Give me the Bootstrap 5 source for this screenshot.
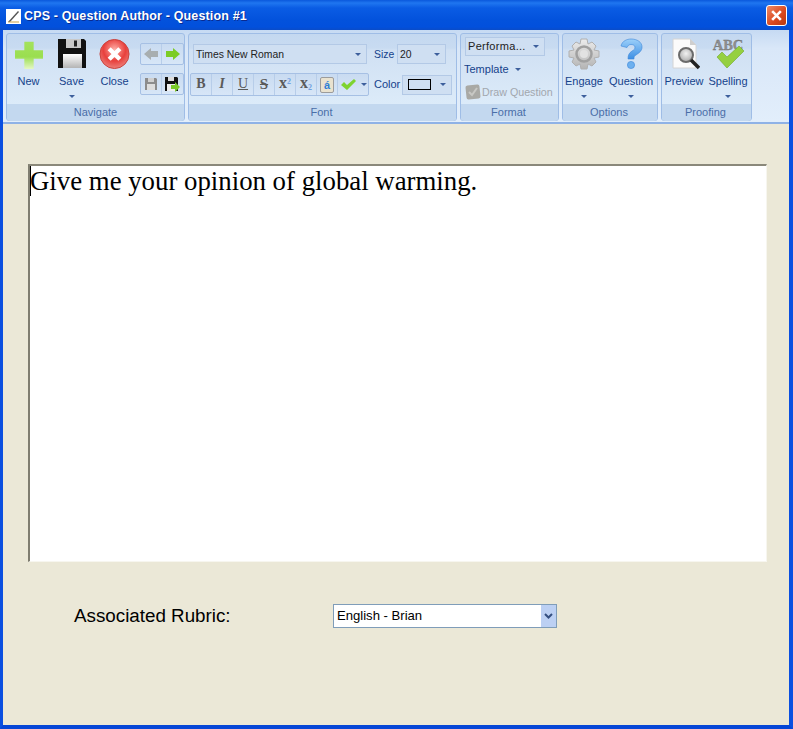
<!DOCTYPE html>
<html lang="en"><head><meta charset="utf-8"><title>CPS - Question Author</title>
<link rel="stylesheet" href="https://cdn.jsdelivr.net/npm/bootstrap@5.3.0/dist/css/bootstrap.min.css">
<style>
html,body{height:100%}
body{width:793px;height:729px;overflow:hidden;background:#ebe8d8;font-family:"Liberation Sans",Arial,sans-serif;color:#000}
.win{height:729px;border:solid #0a4fe0;border-width:0 4px 4px 3px;border-bottom-color:#0546d6;background:#ebe8d7}
.titlebar{height:30px;margin:0 -4px 0 -3px;padding:2px 6px 0 6px;background:linear-gradient(#0a58dc 0,#1f76f0 3px,#0a5ce4 8px,#0352dc 20px,#0250dc 27px,#0a4cc8 30px);color:#fff;font:bold 12.5px "Liberation Sans",sans-serif;text-shadow:1px 1px #0a2a90;letter-spacing:.15px}
.appicon{width:15px;height:15px;margin-right:3px}
.xbtn{width:21px;height:21px;margin-top:-1px;border:1px solid #fff;border-radius:3px;background:linear-gradient(135deg,#ee8a66,#d9471c 60%,#b93a12)}
.ribbon{height:94px;padding:3px 37px 3px 3px;background:linear-gradient(#c6daf3,#d9e7f8 20%,#e2eefb);border-bottom:2px solid #8fb2e6;gap:3px}
.grp{height:88px;border:1px solid #9fbde6;border-radius:3px;background:linear-gradient(#c4d8f0 0,#c8dbf1 14px,#d0e0f3 16px,#dcebf9 70px);color:#15428b;font-size:11px;line-height:13px}
.grp-body{height:70px;flex:none}
.grp-label{height:17px;line-height:17px;background:#c3d8ef;text-align:center;color:#4a6ea8;font-size:11px;border-radius:0 0 3px 3px}
.g-nav{width:179px}.g-font{width:269px}.g-format{width:99px}.g-opt{width:96px}.g-proof{width:91px}
.g-font .grp-label,.g-format .grp-label,.g-opt .grp-label,.g-proof .grp-label{padding-right:2px}
.g-opt .grp-body,.g-proof .grp-body{margin-left:-1px}
.big{padding-top:4px;color:#15428b;flex:none}
.big svg{display:block;height:32px}
.big .t{margin-top:5px;height:13px}
.caret-d{width:0;height:0;border:3px solid transparent;border-top:3px solid #3d5f9c;border-bottom:0;margin-top:7px}
.w43{width:43px}.w42{width:42px}.w44{width:44px}.w50{width:50px}.w46{width:46px}
.tb{border:1px solid #a6c0e4;border-radius:2px;background:linear-gradient(#c9dbf1,#d7e6f7)}
.tb>div{border-right:1px solid #b7cde9}
.tb>div:last-child{border-right:0}
.cell{width:21px;height:100%;font:bold 14px/20px "Liberation Serif",serif;color:#5a5a5a;flex:none}
.cell sup,.cell sub{font-size:8px;color:#6fa0e0;line-height:0}
.combo{border:1px solid #b3c9e6;background:#cfdff2;color:#222;font-size:10.4px;padding:0 5px 0 2px;height:20px;flex:none}
.combo .caret-d{margin-top:0;flex:none}
.navsm{width:44px;height:22px}
.navsm>div{width:50%}
.editor{width:739px;height:398px;margin:40px 0 0 25px;background:#fff;border:1px solid;border-color:#8a887a #f7f6ef #f7f6ef #7f7d70;border-top-width:2px;border-left-width:2px;font:26.8px/30px "Liberation Serif",serif;color:#000}
.caret-line{width:1px;height:30px;background:#000;margin-right:-1px}
.rubric{margin:42px 0 0 71px}
.rubric label{width:259px;font-size:18.8px;line-height:24px}
.rubric .form-select{width:224px;height:24px;border:1px solid #7f9db9;border-radius:0;padding:0 20px 0 3px;font:13.1px/20px "Liberation Sans",sans-serif;color:#000;
background:url("data:image/svg+xml,%3Csvg xmlns='http://www.w3.org/2000/svg' width='15' height='22'%3E%3Crect width='15' height='22' fill='%23bcd0f3'/%3E%3Cpath d='M4 9l3.500 3.500L11 9' fill='none' stroke='%23344f80' stroke-width='2'/%3E%3C/svg%3E") no-repeat right 0 center #fff}
.draw{color:#a2a7ae;font-size:10.7px}
</style></head><body>
<div class="win d-flex flex-column">
<div class="titlebar d-flex align-items-center flex-none">
<svg class="appicon" viewBox="0 0 15 15"><rect width="15" height="15" fill="#fff"/><path d="M2 13L12 2l1 1L4 13z" fill="#555"/><path d="M2 13h11" stroke="#c9a04a"/></svg>
<span class="flex-grow-1">CPS - Question Author - Question #1</span>
<div class="xbtn d-flex align-items-center justify-content-center"><svg width="13" height="13" viewBox="0 0 12 12"><path d="M2 2l8 8M10 2l-8 8" stroke="#fff" stroke-width="2.4"/></svg></div>
</div>
<div class="ribbon d-flex">

<div class="grp g-nav d-flex flex-column">
<div class="grp-body d-flex">
<div class="big w43 d-flex flex-column align-items-center">
<svg width="28" viewBox="0 0 30 32"><defs><linearGradient id="gp" x1="0" y1="0" x2="0" y2="1"><stop offset="0" stop-color="#a4e25c"/><stop offset=".55" stop-color="#9ade50"/><stop offset="1" stop-color="#e4f7c4"/></linearGradient></defs><path d="M10 3h10v9h10v9H20v11H10V21H0v-9h10z" fill="url(#gp)"/></svg>
<div class="t">New</div></div>
<div class="big w43 d-flex flex-column align-items-center">
<svg width="32" viewBox="0 0 32 32"><defs><linearGradient id="gf" x1="0" y1="0" x2="0" y2="1"><stop offset="0" stop-color="#fff"/><stop offset="1" stop-color="#b4b4b4"/></linearGradient></defs><path d="M2 1h26l2 2v27H2z" fill="#111"/><rect x="10" y="1" width="15" height="9" fill="#c9c9c9"/><rect x="18" y="2.500" width="3" height="6" fill="#222"/><rect x="7" y="16" width="19" height="14" fill="url(#gf)"/></svg>
<div class="t">Save</div><div class="caret-d"></div></div>
<div class="big w43 d-flex flex-column align-items-center">
<svg width="31" viewBox="0 0 32 32"><defs><radialGradient id="gc" cx=".5" cy=".35" r=".7"><stop offset="0" stop-color="#ffb0a8"/><stop offset=".55" stop-color="#e8403c"/><stop offset="1" stop-color="#ee8c86"/></radialGradient></defs><circle cx="16" cy="16" r="15" fill="url(#gc)" stroke="#c8413c"/><path d="M10.500 10.500l11 11M21.500 10.500l-11 11" stroke="#fff" stroke-width="4.500"/></svg>
<div class="t">Close</div></div>
<div class="d-flex flex-column" style="margin-left:4px">
<div class="tb navsm d-flex" style="margin-top:9px"><div class="d-flex align-items-center justify-content-center"><svg width="14" height="12" viewBox="0 0 14 12"><path d="M0 6l7-6v3h7v6H7v3z" fill="#a8aeb0"/></svg></div><div class="d-flex align-items-center justify-content-center"><svg width="14" height="12" viewBox="0 0 14 12"><path d="M14 6L7 0v3H0v6h7v3z" fill="#7ccc25"/></svg></div></div>
<div class="tb navsm d-flex mt-2"><div class="d-flex align-items-center justify-content-center"><svg width="14" height="14" viewBox="0 0 14 14"><path d="M1 1h11l1 1v11H1z" fill="#8c8c8c"/><rect x="4" y="1" width="6" height="4" fill="#d0d0d0"/><rect x="3" y="7" width="8" height="6" fill="#ddd"/></svg></div><div class="d-flex align-items-center justify-content-center"><svg width="15" height="15" viewBox="0 0 15 15"><path d="M0 0h12l1 1v13H0z" fill="#111"/><rect x="3" y="0" width="6" height="4" fill="#ddd"/><rect x="2" y="7" width="8" height="7" fill="#eee"/><path d="M15 10l-5-5v3H6v4h4v3z" fill="#7acb2a"/></svg></div></div>
</div>
</div>
<div class="grp-label">Navigate</div></div>

<div class="grp g-font d-flex flex-column">
<div class="grp-body d-flex flex-column">
<div class="d-flex align-items-center" style="margin-top:10px;padding-left:4px">
<div class="combo d-flex align-items-center justify-content-between" style="width:174px"><span>Times New Roman</span><div class="caret-d"></div></div>
<span style="margin-left:7px;width:23px;font-size:10.4px">Size</span>
<div class="combo d-flex align-items-center justify-content-between" style="width:49px"><span>20</span><div class="caret-d"></div></div>
</div>
<div class="d-flex align-items-center" style="margin-top:9px;padding-left:1px">
<div class="tb d-flex" style="height:23px;width:179px">
<div class="cell text-center">B</div><div class="cell text-center fst-italic">I</div><div class="cell text-center text-decoration-underline" style="font-weight:normal">U</div><div class="cell text-center text-decoration-line-through" style="font-size:15px">S</div><div class="cell text-center" style="font-size:16px;line-height:18px">x<sup>2</sup></div><div class="cell text-center" style="font-size:16px;line-height:18px">x<sub>2</sub></div>
<div class="cell d-flex align-items-center justify-content-center"><span class="d-block text-center" style="width:14px;height:16px;background:#e9e2cf;border:1px solid #9c9c9c;border-radius:2px;color:#2f7fd6;font:bold 11px/14px 'Liberation Sans',sans-serif">á</span></div>
<div class="d-flex align-items-center justify-content-center flex-grow-1 gap-1"><svg width="17" height="13" viewBox="0 0 17 13"><path d="M1 7l3-3 3 3 7-6 2 2-9 9z" fill="#7ed32f"/></svg><div class="caret-d" style="margin-top:0"></div></div>
</div>
<span style="margin-left:5px">Color</span>
<div class="combo d-flex align-items-center justify-content-between ms-auto" style="width:50px;margin-right:4px;padding-left:5px"><span class="d-block" style="width:23px;height:11px;border:1px solid #000"></span><div class="caret-d"></div></div>
</div>
</div>
<div class="grp-label">Font</div></div>

<div class="grp g-format d-flex flex-column">
<div class="grp-body" style="padding:3px 0 0 4px">
<div class="combo d-flex align-items-center justify-content-between" style="width:80px;height:19px;font-size:11px"><span style="letter-spacing:.3px">Performa...</span><div class="caret-d"></div></div>
<div class="d-flex align-items-center gap-1" style="margin:7px 0 0 -1px;height:13px;color:#15428b">Template<div class="caret-d" style="margin:0 0 0 2px"></div></div>
<div class="d-flex align-items-center draw" style="margin-top:8px;gap:1px"><svg width="16" height="16" viewBox="0 0 16 16"><rect x="1" y="1" width="14" height="14" rx="2" fill="#a9a9a5" transform="rotate(-6 8 8)"/><path d="M4 8l3 3 5-7" stroke="#c8c8c4" stroke-width="2" fill="none"/></svg><span>Draw Question</span></div>
</div>
<div class="grp-label">Format</div></div>

<div class="grp g-opt d-flex flex-column">
<div class="grp-body d-flex">
<div class="big w44 d-flex flex-column align-items-center">
<svg width="32" viewBox="0 0 32 32"><defs><linearGradient id="gg" x1="0" y1="0" x2="0" y2="1"><stop offset="0" stop-color="#ececec"/><stop offset="1" stop-color="#b4b4b4"/></linearGradient></defs><path d="M13 1h6l1 5 4-2 4 4-2 4 5 1v6l-5 1 2 4-4 4-4-2-1 5h-6l-1-5-4 2-4-4 2-4-5-1v-6l5-1-2-4 4-4 4 2z" fill="url(#gg)" stroke="#b0b0b0"/><circle cx="16" cy="16" r="7.500" fill="none" stroke="#a0a0a0" stroke-width="2.500"/><circle cx="16" cy="16" r="4" fill="#e2e2e2"/></svg>
<div class="t">Engage</div><div class="caret-d"></div></div>
<div class="big w50 d-flex flex-column align-items-center">
<svg width="24" viewBox="0 0 24 32"><defs><linearGradient id="gq" x1="0" y1="0" x2="0" y2="1"><stop offset="0" stop-color="#9cd0fa"/><stop offset="1" stop-color="#3d8fe4"/></linearGradient></defs><path d="M2 8C3 3 8 1 12 1c6 0 11 3 11 8 0 4-3 6-6 8-2 1-2 2-2 4H9c0-4 1-6 4-8 2-1 3-2 3-4 0-1.500-2-2.500-4-2.500-2 0-3 1-4 3z" fill="url(#gq)" stroke="#3d87d8" stroke-width=".6"/><circle cx="12" cy="27" r="3.600" fill="#6db0ef" stroke="#3d87d8" stroke-width=".6"/></svg>
<div class="t">Question</div><div class="caret-d"></div></div>
</div>
<div class="grp-label">Options</div></div>

<div class="grp g-proof d-flex flex-column">
<div class="grp-body d-flex">
<div class="big w46 d-flex flex-column align-items-center">
<svg width="32" viewBox="0 0 32 32"><defs><radialGradient id="gm" cx=".5" cy=".4" r=".6"><stop offset="0" stop-color="#f2f2f2"/><stop offset="1" stop-color="#a9a9a9"/></radialGradient></defs><path d="M5 1h17l6 6v23H5z" fill="#fbfbfb" stroke="#d4d4d4"/><path d="M22 1v6h6z" fill="#cfcfcf"/><circle cx="18" cy="17" r="7" fill="url(#gm)" stroke="#6b6b6b" stroke-width="2"/><path d="M23 22l8 8" stroke="#222" stroke-width="3.500"/></svg>
<div class="t">Preview</div></div>
<div class="big w42 d-flex flex-column align-items-center">
<svg width="32" viewBox="0 0 32 32"><text x="16" y="12" text-anchor="middle" font-family="Liberation Serif" font-weight="bold" font-size="14.500" fill="#8f8f8f" stroke="#6f6f6f" stroke-width=".3">ABC</text><path d="M5 19l5-5 5 5L27 8l5 5-17 17z" fill="#95d040" stroke="#6ea828" stroke-width=".6"/></svg>
<div class="t">Spelling</div><div class="caret-d"></div></div>
</div>
<div class="grp-label">Proofing</div></div>

</div>
<div class="editor d-flex"><div class="caret-line flex-none"></div><div>Give me your opinion of global warming.</div></div>
<div class="rubric d-flex align-items-center">
<label for="rb">Associated Rubric:</label>
<select id="rb" class="form-select"><option>English - Brian</option></select>
</div>
</div>
<script src="https://cdn.jsdelivr.net/npm/bootstrap@5.3.0/dist/js/bootstrap.bundle.min.js"></script>
</body></html>
